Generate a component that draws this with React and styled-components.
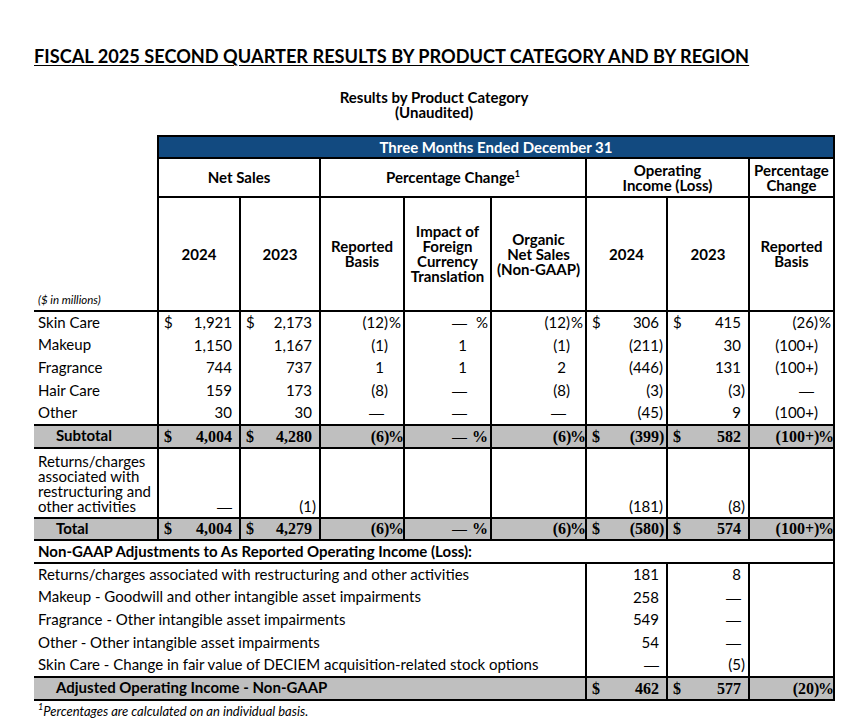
import React from "react";
import styled, { createGlobalStyle } from "styled-components";

const GlobalStyle = createGlobalStyle`
  html, body { margin: 0; padding: 0; background: #fff; }
  body { font-family: Lato, "Open Sans", sans-serif; color: #000; }
`;

const Page = styled.div`
  width: 800px;
  padding: 45px 0 0 34px;
`;

const Title = styled.h1`
  margin: 0;
  font-size: 18.2px;
  font-weight: 700;
  line-height: 22px;
  text-decoration: underline;
  text-decoration-thickness: 1px;
  text-underline-offset: 2px;
`;

const Subtitle = styled.div`
  margin: 23px 0 15px;
  text-align: center;
  font-size: 15px;
  font-weight: 700;
  line-height: 15px;
`;

const Table = styled.table`
  border-collapse: collapse;
  table-layout: fixed;
  width: 800px;
  font-size: 15px;
  line-height: 15px;
`;

const Row = styled.tr`
  height: ${(p) => p.$h || 22.75}px;
  background: ${(p) => (p.$total ? "#bfbfbf" : "transparent")};
  border-top: ${(p) => (p.$total ? "2px solid #000" : "none")};
  border-bottom: ${(p) => (p.$total ? "2px solid #000" : "none")};
`;

const Blank = styled.th`
  padding: 0;
`;

const Band = styled.th`
  background: #124a80;
  color: #fff;
  font-weight: 700;
  font-size: 15px;
  text-align: center;
  border: 2px solid #000;
  height: 20px;
  padding: 0;
`;

const GroupHead = styled.th`
  border: 2px solid #000;
  font-weight: 700;
  text-align: center;
  vertical-align: middle;
  padding: 0 2px;
  line-height: 15px;
  height: 37px;
`;

const ColHead = styled.th`
  border: 2px solid #000;
  font-weight: 700;
  text-align: center;
  vertical-align: middle;
  padding: 0 2px;
  line-height: 15px;
  height: 112px;
`;

const UnitsCell = styled.th`
  border-bottom: 2px solid #000;
  text-align: left;
  vertical-align: bottom;
  padding: 0 0 3px 4px;
  font-size: 11.5px;
  font-style: italic;
  font-weight: 400;
`;

const Label = styled.td`
  padding: 0 0 0 ${(p) => (p.$indent ? 22 : 4)}px;
  font-weight: ${(p) => (p.$bold ? 700 : 400)};
  vertical-align: ${(p) => (p.$top ? "top" : "middle")};
  white-space: ${(p) => (p.$wrap ? "normal" : "nowrap")};
  line-height: 15.3px;
  ${(p) => (p.$wrap ? "padding-top: 5px;" : "")}
  ${(p) => (p.$boxed ? "border-right: 2px solid #000; border-bottom: 2px solid #000;" : "")}
`;

const Value = styled.td`
  border-left: 2px solid #000;
  border-right: 2px solid #000;
  padding: 0;
  vertical-align: ${(p) => (p.$bottom ? "bottom" : "middle")};
  ${(p) => (p.$bottom ? "padding-bottom: 3px;" : "")}
`;

const Fig = styled.div`
  display: flex;
  align-items: baseline;
  justify-content: space-between;
  padding: 0 ${(p) => p.$pr ?? 3}px 0 5px;
  font-family: ${(p) => (p.$bold ? '"Liberation Serif", "Times New Roman", serif' : "inherit")};
  font-weight: ${(p) => (p.$bold ? 700 : 400)};
  font-size: ${(p) => (p.$bold ? 16 : 15)}px;
`;

const Cur = styled.span``;

const Amount = styled.span`
  display: flex;
  align-items: baseline;
`;

const Dash = styled.span`
  font-family: "Liberation Sans", Arial, sans-serif;
  font-weight: 400;
  font-size: 15px;
`;

const Paren = styled.span`
  display: inline-block;
  width: 4px;
  text-align: left;
`;

const Suffix = styled.span`
  display: inline-block;
  width: ${(p) => p.$w || 13}px;
  text-align: right;
`;

const Sup = styled.sup`
  font-size: 9px;
  line-height: 0;
  vertical-align: 6px;
`;

const Footnote = styled.div`
  margin-top: 2px;
  padding-left: 4px;
  font-size: 13px;
  font-style: italic;
`;

const D = "\u2014";

function splitParen(v) {
  if (v.startsWith("(") && v.endsWith(")")) return [v.slice(0, -1), ")"];
  return [v, ""];
}

function Body({ text }) {
  return text === D ? <Dash>{D}</Dash> : <>{text}</>;
}

function Money({ v, cur, bold, bottom }) {
  const [body, close] = splitParen(v);
  return (
    <Value $bottom={bottom}>
      <Fig $bold={bold}>
        <Cur>{cur ? "$" : ""}</Cur>
        <Amount>
          <Body text={body} />
          <Paren>{close}</Paren>
        </Amount>
      </Fig>
    </Value>
  );
}

function Pct({ v, pct, bold, w }) {
  if (v === undefined) return <Value />;
  const [body, close] = splitParen(v);
  return (
    <Value>
      <Fig $bold={bold} $pr={2}>
        <Cur />
        <Amount>
          <Body text={body} />
          <Paren>{close}</Paren>
          <Suffix $w={w}>{pct ? "%" : ""}</Suffix>
        </Amount>
      </Fig>
    </Value>
  );
}

const products = [
  { n: "Skin Care", a: "1,921", b: "2,173", r: "(12)", f: D, o: "(12)", c: "306", d: "415", p: "(26)", pct: true, cur: true },
  { n: "Makeup", a: "1,150", b: "1,167", r: "(1)", f: "1", o: "(1)", c: "(211)", d: "30", p: "(100+)" },
  { n: "Fragrance", a: "744", b: "737", r: "1", f: "1", o: "2", c: "(446)", d: "131", p: "(100+)" },
  { n: "Hair Care", a: "159", b: "173", r: "(8)", f: D, o: "(8)", c: "(3)", d: "(3)", p: D },
  { n: "Other", a: "30", b: "30", r: D, f: D, o: D, c: "(45)", d: "9", p: "(100+)" },
];

const adjustments = [
  { n: "Returns/charges associated with restructuring and other activities", c: "181", d: "8" },
  { n: "Makeup - Goodwill and other intangible asset impairments", c: "258", d: D },
  { n: "Fragrance - Other intangible asset impairments", c: "549", d: D },
  { n: "Other - Other intangible asset impairments", c: "54", d: D },
  { n: "Skin Care - Change in fair value of DECIEM acquisition-related stock options", c: D, d: "(5)" },
];

function TotalRow({ label, a, b, r, f, o, c, d, p }) {
  return (
    <Row $total>
      <Label $indent $bold>{label}</Label>
      <Money v={a} cur bold />
      <Money v={b} cur bold />
      <Pct v={r} pct bold />
      <Pct v={f} pct bold w={17} />
      <Pct v={o} pct bold />
      <Money v={c} cur bold />
      <Money v={d} cur bold />
      <Pct v={p} pct bold />
    </Row>
  );
}

export default function App() {
  return (
    <Page>
      <GlobalStyle />
      <Title>FISCAL 2025 SECOND QUARTER RESULTS BY PRODUCT CATEGORY AND BY REGION</Title>
      <Subtitle>
        Results by Product Category
        <br />
        (Unaudited)
      </Subtitle>
      <Table>
        <colgroup>
          <col style={{ width: 124 }} />
          <col style={{ width: 82 }} />
          <col style={{ width: 80 }} />
          <col style={{ width: 84 }} />
          <col style={{ width: 87 }} />
          <col style={{ width: 95 }} />
          <col style={{ width: 81 }} />
          <col style={{ width: 82 }} />
          <col style={{ width: 85 }} />
        </colgroup>
        <thead>
          <tr>
            <Blank />
            <Band colSpan={8}>Three Months Ended December 31</Band>
          </tr>
          <tr>
            <Blank />
            <GroupHead colSpan={2}>Net Sales</GroupHead>
            <GroupHead colSpan={3}>
              Percentage Change<Sup>1</Sup>
            </GroupHead>
            <GroupHead colSpan={2}>
              Operating
              <br />
              Income (Loss)
            </GroupHead>
            <GroupHead>
              Percentage
              <br />
              Change
            </GroupHead>
          </tr>
          <tr>
            <UnitsCell>($ in millions)</UnitsCell>
            <ColHead>2024</ColHead>
            <ColHead>2023</ColHead>
            <ColHead>
              Reported
              <br />
              Basis
            </ColHead>
            <ColHead>
              Impact of
              <br />
              Foreign
              <br />
              Currency
              <br />
              Translation
            </ColHead>
            <ColHead>
              Organic
              <br />
              Net Sales
              <br />
              (Non-GAAP)
            </ColHead>
            <ColHead>2024</ColHead>
            <ColHead>2023</ColHead>
            <ColHead>
              Reported
              <br />
              Basis
            </ColHead>
          </tr>
        </thead>
        <tbody>
          {products.map((r) => (
            <Row key={r.n}>
              <Label>{r.n}</Label>
              <Money v={r.a} cur={r.cur} />
              <Money v={r.b} cur={r.cur} />
              <Pct v={r.r} pct={r.pct} />
              <Pct v={r.f} pct={r.pct} w={17} />
              <Pct v={r.o} pct={r.pct} />
              <Money v={r.c} cur={r.cur} />
              <Money v={r.d} cur={r.cur} />
              <Pct v={r.p} pct={r.pct} />
            </Row>
          ))}
          <TotalRow label="Subtotal" a="4,004" b="4,280" r="(6)" f={D} o="(6)" c="(399)" d="582" p="(100+)" />
          <Row $h={70}>
            <Label $wrap $top>
              Returns/charges associated with restructuring and other activities
            </Label>
            <Money v={D} bottom />
            <Money v="(1)" bottom />
            <Value />
            <Value />
            <Value />
            <Money v="(181)" bottom />
            <Money v="(8)" bottom />
            <Value />
          </Row>
          <TotalRow label="Total" a="4,004" b="4,279" r="(6)" f={D} o="(6)" c="(580)" d="574" p="(100+)" />
          <Row>
            <Label colSpan={9} $bold $boxed>
              Non-GAAP Adjustments to As Reported Operating Income (Loss):
            </Label>
          </Row>
          {adjustments.map((r) => (
            <Row key={r.n}>
              <Label colSpan={6}>{r.n}</Label>
              <Money v={r.c} />
              <Money v={r.d} />
              <Value />
            </Row>
          ))}
          <Row $total>
            <Label colSpan={6} $indent $bold>
              Adjusted Operating Income - Non-GAAP
            </Label>
            <Money v="462" cur bold />
            <Money v="577" cur bold />
            <Pct v="(20)" pct bold />
          </Row>
        </tbody>
      </Table>
      <Footnote>
        <Sup>1</Sup>Percentages are calculated on an individual basis.
      </Footnote>
    </Page>
  );
}
